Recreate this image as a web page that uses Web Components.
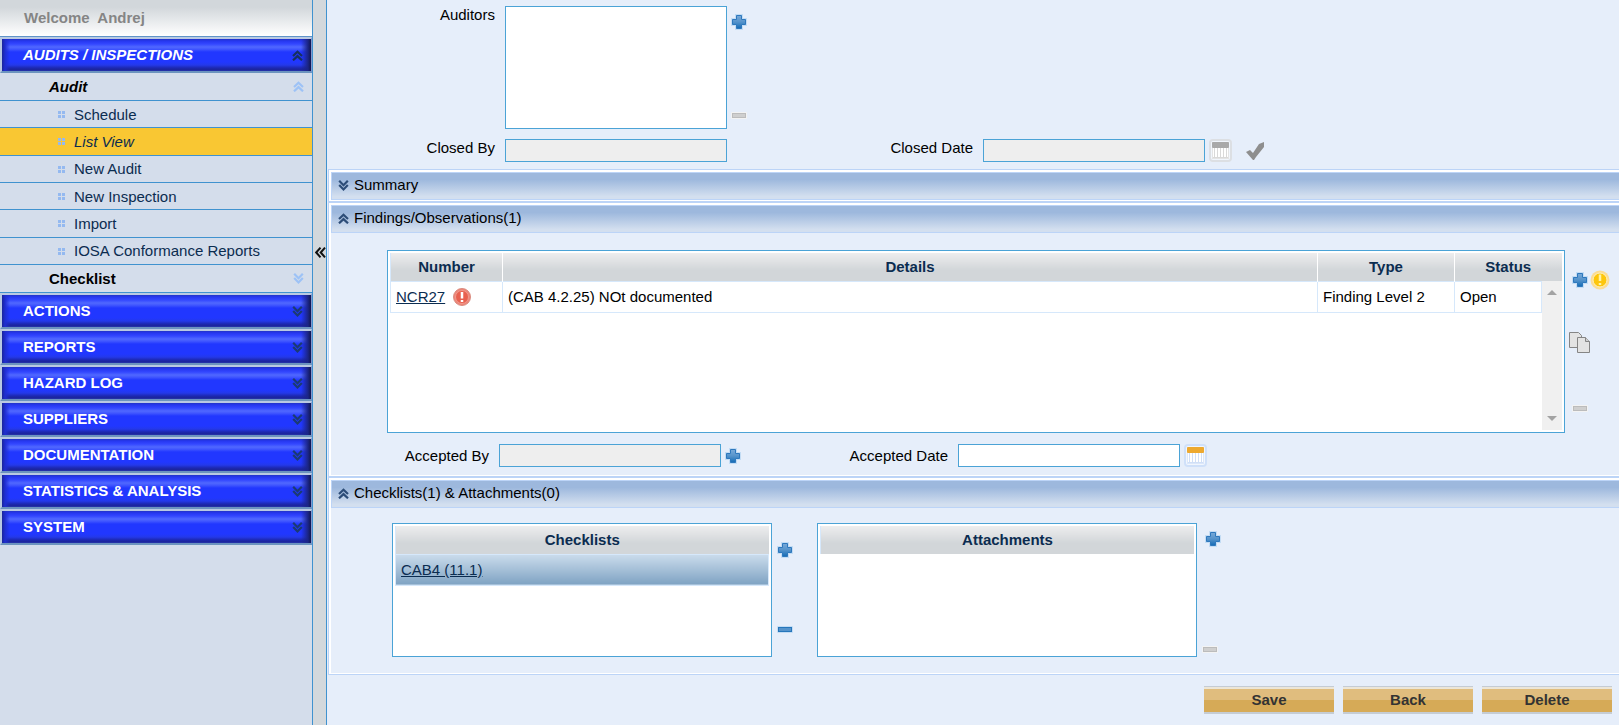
<!DOCTYPE html>
<html lang="en">
<head>
<meta charset="utf-8">
<title>Audits / Inspections</title>
<style>
html, body { margin: 0; height: 100%; }
body { font: 15px/20px "Liberation Sans", Arial, sans-serif; color: #000; background: #e6eefa; }
</style>
</head>
<body>
<audit-app></audit-app>
<script>
/* Registers an element; setup fills the template's copy before it goes live. */
const define = (name, html, setup) => {
  const t = document.createElement('template');
  t.innerHTML = html;
  customElements.define(name, class extends HTMLElement {
    connectedCallback() {
      if (this.shadowRoot) return;
      const copy = t.content.cloneNode(true);
      if (setup) setup(copy, this);
      this.attachShadow({ mode: 'open' }).append(copy);
    }
  });
};

/* ---------- icons ---------- */
const PLUS = 'M5.5 1.5h5v4h4v5h-4v4h-5v-4h-4v-5h4z';
const chevrons = (up, c) => `<svg width="11" height="11" viewBox="0 0 11 11" fill="none" stroke="${c}" stroke-width="2.200"><path d="${up ? 'M1 6l4.500-4.200L10 6M1 10.300l4.500-4.200 4.500 4.200' : 'M1.200 .8l4.300 4.400L9.800 .8M1.200 5l4.300 4.400L9.800 5'}"/></svg>`;
const calendar = (edge, frame, bar, line) => `<svg width="23" height="23" viewBox="0 0 23 23"><rect x="1" y="1" width="21" height="21" rx="3" fill="#f4f8fe" fill-opacity=".75" stroke="${edge}" stroke-width="2"/><rect x="3.500" y="3.500" width="16" height="16" fill="#fff" stroke="${frame}"/><path d="M5.500 9v10M8.500 9v10M11.500 9v10M14.500 9v10M17.500 9v10M4 18.500h15" stroke="${line}"/><rect x="3" y="3" width="17" height="6" rx="1" fill="${bar}"/></svg>`;
const ICONS = {
  plus: `<svg width="16" height="16" viewBox="0 0 16 16"><defs><linearGradient id="g" x2="0" y2="1"><stop offset="0" stop-color="#78a9d8"/><stop offset=".5" stop-color="#5593cb"/><stop offset="1" stop-color="#146bb5"/></linearGradient></defs><path d="${PLUS}" fill="none" stroke="#c3dcf4" stroke-width="3"/><path d="${PLUS}" fill="url(#g)" stroke="#2e78bd"/></svg>`,
  minus: `<svg width="16" height="7" viewBox="0 0 16 7"><rect width="16" height="7" rx="1" fill="#c3dcf4"/><rect x="1.500" y="1.500" width="13" height="4" fill="#5593cb" stroke="#2676bb"/></svg>`,
  'minus-off': `<svg width="16" height="7" viewBox="0 0 16 7"><rect width="16" height="7" rx="1" fill="#f3f3f3"/><rect x="1.500" y="1.500" width="13" height="4" fill="#cfcfcf" stroke="#bcbcbc"/></svg>`,
  calendar: calendar('#cfe0f9', '#dbe7fa', '#eda92f', '#d0dff6'),
  'calendar-off': calendar('#dcdfe3', '#e4e4e4', '#a9a9a9', '#d9d9d9'),
  check: `<svg width="18" height="19" viewBox="0 0 18 19"><path d="M0 11l4-2 3 3 6-9 5-2v5l-8 10-2 3H7z" fill="#8e8e8e"/></svg>`,
  warn: `<svg width="20" height="20" viewBox="0 0 20 20"><circle cx="10" cy="10" r="9.500" fill="#fbdc93"/><circle cx="10" cy="10" r="7" fill="#fdc60c" stroke="#fff0bd" stroke-width="1"/><path d="M10 4.500v6.500M10 13v2" stroke="#fff3a8" stroke-width="2.500"/></svg>`,
  error: `<svg width="18" height="18" viewBox="0 0 18 18"><circle cx="9" cy="9" r="8.500" fill="#ee8577" stroke="#d98c80"/><circle cx="9" cy="9" r="6.500" fill="#e8604f" stroke="#f09a8d"/><path d="M9 4v6.500M9 12v2" stroke="#fff" stroke-width="2.500"/></svg>`,
  copy: `<svg width="21" height="21" viewBox="0 0 21 21" stroke="#858585"><path d="M.5.5h9l3 3v12H.5z" fill="#e3e3e3"/><path d="M8.500 5.500h8l4 4v11h-12z" fill="#e3e3e3"/><path d="M16.500 5.500v4h4" fill="#cfcfcf"/></svg>`,
  'nav-up': chevrons(true, '#16305f'),
  'nav-down': chevrons(false, '#1b3a73'),
  'sub-up': chevrons(true, '#9dc2f6'),
  'sub-down': chevrons(false, '#9dc2f6'),
  'bar-up': chevrons(true, '#2d4d78'),
  'bar-down': chevrons(false, '#2d4d78'),
  collapse: `<svg width="11" height="11" viewBox="0 0 11 11" fill="none" stroke="#111" stroke-width="2"><path d="M5.500 .7l-4.300 4.800 4.300 4.800M10 .7L5.700 5.500l4.300 4.800"/></svg>`,
  dots: `<svg width="7" height="7" viewBox="0 0 7 7" fill="#94b9f0"><path d="M0 0h3v3H0zM4 0h3v3H4zM0 4h3v3H0zM4 4h3v3H4z"/></svg>`
};
define('ui-icon', `<style>:host{display:inline-block;flex:none}svg{display:block}</style>`, (root, el) => {
  root.append(document.createRange().createContextualFragment(ICONS[el.getAttribute('name')]));
});

define('icon-button', `<style>
:host{display:inline-block;flex:none}
button{display:block;padding:0;border:0;background:none}
ui-icon{display:block}
</style><button type="button"><ui-icon></ui-icon></button>`, (root, el) => {
  root.querySelector('ui-icon').setAttribute('name', el.getAttribute('icon'));
  root.querySelector('button').setAttribute('aria-label', el.getAttribute('label'));
});

/* ---------- sidebar ---------- */
define('nav-section', `<style>
:host{display:block}
button{display:flex;align-items:center;justify-content:space-between;box-sizing:border-box;width:100%;height:36px;
 padding:0 8px 0 21px;border:solid;border-width:2px 1px 2px 2px;border-color:#b9c9e2 #8298cd #6c94bf #b9c9e2;
 font:bold 15px/20px "Liberation Sans",Arial,sans-serif;color:#fff;text-align:left;
 background:
  linear-gradient(90deg,#1a259c,#1f2ed0 3px,#2137ff00 8px,#2137ff00 calc(100% - 10px),#1b2586 calc(100% - 3px),#10164f),
  linear-gradient(#2233c8 0,#2637f0 2px,#3347ff 5px,#5068ff 8px,#4258ff 10px,#2137ff 13px,#2137ff 23px,#2439ea 26px,#1d28b0 29px,#1c2499 31px,#2c3cb4)}
:host([open]) button{font-style:italic}
</style><button type="button"><slot></slot><ui-icon></ui-icon></button>`, (root, el) => {
  root.querySelector('ui-icon').setAttribute('name', el.hasAttribute('open') ? 'nav-up' : 'nav-down');
});

define('nav-group', `<style>
:host{display:block}
button{display:flex;align-items:center;justify-content:space-between;box-sizing:border-box;width:100%;height:28px;
 padding:0 8px 0 49px;border:0;border-bottom:1px solid #4092cf;background:none;
 font:bold 15px/20px "Liberation Sans",Arial,sans-serif;color:#000}
:host([open]) button{font-style:italic}
</style><button type="button"><slot></slot><ui-icon></ui-icon></button>`, (root, el) => {
  root.querySelector('ui-icon').setAttribute('name', el.hasAttribute('open') ? 'sub-up' : 'sub-down');
});

define('nav-item', `<style>
:host{display:block}
a{display:flex;align-items:center;gap:9px;box-sizing:border-box;height:100%;padding:1px 0 0 58px;
 border-bottom:1px solid #4092cf;color:#0b2c50;text-decoration:none}
:host([current]) a{background:#f9c733;font-style:italic}
</style><a href="#"><ui-icon name="dots"></ui-icon><slot></slot></a>`);

define('side-nav', `<style>
:host{display:block;box-sizing:border-box;width:313px;flex:none;background:#d4ddeb;border-right:1px solid #4092cf}
.welcome{height:36px;line-height:36px;padding-left:24px;font-weight:bold;color:#858585;white-space:pre;
 background:linear-gradient(#d2d7db 20%,#fff);border-bottom:1px solid #5f94c8}
.items{display:grid;grid-auto-rows:1fr;height:164px}
</style>
<div class="welcome">Welcome  Andrej</div>
<nav>
<nav-section open>AUDITS / INSPECTIONS</nav-section>
<nav-group open>Audit</nav-group>
<div class="items"><nav-item>Schedule</nav-item><nav-item current>List View</nav-item><nav-item>New Audit</nav-item><nav-item>New Inspection</nav-item><nav-item>Import</nav-item><nav-item>IOSA Conformance Reports</nav-item></div>
<nav-group>Checklist</nav-group>
<nav-section>ACTIONS</nav-section><nav-section>REPORTS</nav-section><nav-section>HAZARD LOG</nav-section><nav-section>SUPPLIERS</nav-section><nav-section>DOCUMENTATION</nav-section><nav-section>STATISTICS &amp; ANALYSIS</nav-section><nav-section>SYSTEM</nav-section>
</nav>`);

define('side-splitter', `<style>
:host{display:flex;flex:none;box-sizing:border-box;width:14px;padding:247px 0 0 2px;background:#d3d8dc;border-right:1px solid #4092cf}
</style><icon-button icon="collapse" label="Collapse menu"></icon-button>`);

/* ---------- form parts ---------- */
define('form-field', `<style>
:host{display:contents}
label{text-align:right;line-height:var(--label-line,20px)}
.field{display:flex;align-items:center;gap:4px;padding-left:10px}
input{box-sizing:border-box;width:222px;height:23px;margin:0;padding:0 4px;border:1px solid #4ba3d6;background:#fff;font:inherit}
input:disabled{background:#eee}
</style><label for="f"></label><div class="field"><input id="f" type="text"><slot></slot></div>`, (root, el) => {
  root.querySelector('label').textContent = el.getAttribute('label');
  root.querySelector('input').disabled = el.hasAttribute('disabled');
});

define('tool-column', `<style>
:host{display:flex;flex-direction:column;justify-content:space-between;flex:none}
</style><slot></slot>`);

define('list-box', `<style>
:host{display:block;box-sizing:border-box;padding:2px;border:1px solid #4ba3d6;background:#fff}
</style><slot></slot>`);

define('fold-panel', `<style>
:host{display:block;padding:2px 0 1px 2px;background:#fff;border:solid #bcd4f7;border-width:1px 0 1px 1px}
button{display:flex;align-items:center;gap:5px;box-sizing:border-box;width:100%;height:28px;padding:0 6px 2px;
 border:solid #bcd4f7;border-width:1px 0 1px 1px;background:linear-gradient(#9db8dd 25%,#d3dfef 90%);
 font:15px/20px "Liberation Sans",Arial,sans-serif;color:#000}
.body{background:#e6eefa}
</style><button type="button"><ui-icon></ui-icon><span></span></button><div class="body"><slot></slot></div>`, (root, el) => {
  root.querySelector('ui-icon').setAttribute('name', el.hasAttribute('open') ? 'bar-up' : 'bar-down');
  root.querySelector('span').textContent = el.getAttribute('heading');
});

define('gold-button', `<style>
:host{display:block;width:130px}
button{display:block;width:100%;height:28px;padding:0;border:solid;border-width:1px 0 2px;border-color:#c5ccd4 transparent #c5ccd4;
 background:linear-gradient(#ece6d8 2px,#e0bd7e 2px,#e0bd7e 13px,#d6aa57 13px);
 font:bold 15px/20px "Liberation Sans",Arial,sans-serif;color:#333}
</style><button type="button"><slot></slot></button>`);

/* ---------- tables ---------- */
const TABLE = `
table{border-collapse:collapse;table-layout:fixed;width:100%}
th{box-sizing:border-box;height:28px;padding:0;border-left:1px solid #fff;color:#0b2c50;background:linear-gradient(#ededee,#d2d6d9 60%)}
th:first-child{border-left-color:#d6e8fb}
td{box-sizing:border-box;height:31px;padding:0 5px;border:1px solid #d6e8fb}
a{color:#0b2c50}`;

define('findings-table', `<style>${TABLE}
:host{display:flex;height:177px;width:100%}
.main{flex:1}
.side{display:flex;flex-direction:column;width:20px}
.cap{height:28px;margin-left:-1px;background:linear-gradient(#ededee,#d2d6d9 60%)}
.scroll{flex:1;display:flex;flex-direction:column;justify-content:space-between;align-items:center;box-sizing:border-box;padding:9px 0;background:#f0f0f0}
th{padding-top:1px}
.num{width:112px}.type{width:137px}.status{width:87px}
.status span{padding-left:20px}
.id{display:flex;align-items:center;gap:8px}
</style><div class="main"><table>
<thead><tr><th class="num">Number</th><th>Details</th><th class="type">Type</th><th class="status"><span>Status</span></th></tr></thead>
<tbody><tr><td><div class="id"><a href="#">NCR27</a><ui-icon name="error"></ui-icon></div></td><td>(CAB 4.2.25) NOt documented</td><td>Finding Level 2</td><td>Open</td></tr></tbody>
</table></div><div class="side"><div class="cap"></div><div class="scroll">
<svg width="10" height="5"><path d="M0 5l5-5 5 5z" fill="#a3a3a3"/></svg><svg width="10" height="5"><path d="M0 0l5 5 5-5z" fill="#a3a3a3"/></svg></div></div>`);

define('checklists-table', `<style>${TABLE}
td{background:linear-gradient(#cbdcec,#7fa3c3)}
</style><table><thead><tr><th>Checklists</th></tr></thead><tbody><tr><td><a href="#">CAB4 (11.1)</a></td></tr></tbody></table>`);

define('attachments-table', `<style>${TABLE}</style><table><thead><tr><th>Attachments</th></tr></thead></table>`);

/* ---------- page ---------- */
define('audit-form', `<style>
:host{display:block;flex:1;min-width:0}
.top{display:grid;grid-template-columns:13% 24% 13% 1fr;row-gap:10px;padding:6px 0 7px;--label-line:18px}
.top > label{text-align:right;line-height:18px}
.auditors{grid-column:2 / -1;display:flex;gap:4px;padding-left:10px}
.auditors list-box{width:222px;height:123px}
.auditors tool-column{padding:8px 0 10px}
.check{margin-left:10px}
fold-panel{margin-left:1px}
.findings{display:flex;padding:17px 9px 0 56px}
.findings list-box{flex:1;min-width:0;height:183px}
.findings tool-column{padding:20px 0 21px 4px}
.pair{display:flex;align-items:center;gap:2px;padding-left:3px}
.in{padding-left:3px}
.copy{margin-bottom:10px}
.accepted{display:grid;grid-template-columns:158px 301px 158px 1fr;padding:11px 0 8px;--label-line:23px}
.lists{display:flex;gap:24px;padding:15px 0 16px 61px}
.lists > div{display:flex;gap:5px}
.lists list-box{width:380px;height:134px}
.lists tool-column{padding:19px 0 24px}
.lists .att{padding:8px 0 4px}
footer{display:flex;justify-content:flex-end;gap:9px;padding:11px 7px}
</style>
<div class="top">
<label id="aud">Auditors</label>
<div class="auditors"><list-box role="listbox" aria-labelledby="aud"></list-box><tool-column><icon-button icon="plus" label="Add auditor"></icon-button><icon-button icon="minus-off" label="Remove auditor"></icon-button></tool-column></div>
<form-field label="Closed By" disabled></form-field>
<form-field label="Closed Date" disabled><icon-button icon="calendar-off" label="Pick closed date"></icon-button><icon-button class="check" icon="check" label="Close audit"></icon-button></form-field>
</div>
<fold-panel heading="Summary"></fold-panel>
<fold-panel heading="Findings/Observations(1)" open>
<div class="findings"><list-box><findings-table></findings-table></list-box>
<tool-column><div class="pair"><icon-button icon="plus" label="Add finding"></icon-button><icon-button icon="warn" label="Add observation"></icon-button></div><icon-button class="copy" icon="copy" label="Copy finding"></icon-button><icon-button class="in" icon="minus-off" label="Remove finding"></icon-button></tool-column></div>
<div class="accepted"><form-field label="Accepted By" disabled><icon-button icon="plus" label="Set accepted by"></icon-button></form-field>
<form-field label="Accepted Date"><icon-button icon="calendar" label="Pick accepted date"></icon-button></form-field></div>
</fold-panel>
<fold-panel heading="Checklists(1) &amp; Attachments(0)" open>
<div class="lists">
<div><list-box><checklists-table></checklists-table></list-box><tool-column><icon-button icon="plus" label="Add checklist"></icon-button><icon-button icon="minus" label="Remove checklist"></icon-button></tool-column></div>
<div><list-box><attachments-table></attachments-table></list-box><tool-column class="att"><icon-button class="in" icon="plus" label="Add attachment"></icon-button><icon-button icon="minus-off" label="Remove attachment"></icon-button></tool-column></div>
</div>
</fold-panel>
<footer><gold-button>Save</gold-button><gold-button>Back</gold-button><gold-button>Delete</gold-button></footer>`);

define('audit-app', `<style>:host{display:flex;min-height:100vh}</style>
<side-nav></side-nav><side-splitter></side-splitter><audit-form></audit-form>`);
</script>
</body>
</html>
